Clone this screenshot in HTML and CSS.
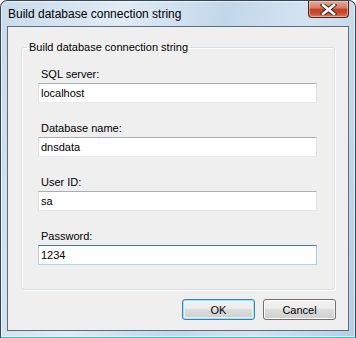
FILE: index.html
```html
<!DOCTYPE html>
<html lang="en">
<head>
    <meta charset="UTF-8">
    <meta name="viewport" content="width=device-width, initial-scale=1.0">
    <title>Build database connection string</title>
    <link rel="stylesheet" href="styles.css">
</head>
<body>
    <div class="window">
        <div class="titlebar">
            <span class="title">Build database connection string</span>
            <button class="close" title="Close">
                <svg width="17" height="11" viewBox="0 0 17 11">
                    <path d="M3 1 L14 10 M14 1 L3 10" stroke="#3a2a28" stroke-width="4.5" stroke-linecap="square"/>
                    <path d="M3 1 L14 10 M14 1 L3 10" stroke="#ffffff" stroke-width="2.5" stroke-linecap="square"/>
                </svg>
            </button>
        </div>
        <div class="client">
            <fieldset class="group">
                <legend>Build database connection string</legend>
                <div class="field">
                    <label for="server">SQL server:</label>
                    <input id="server" type="text" value="localhost">
                </div>
                <div class="field">
                    <label for="database">Database name:</label>
                    <input id="database" type="text" value="dnsdata">
                </div>
                <div class="field">
                    <label for="user">User ID:</label>
                    <input id="user" type="text" value="sa">
                </div>
                <div class="field">
                    <label for="password">Password:</label>
                    <input id="password" class="focused" type="text" value="1234">
                </div>
            </fieldset>
            <div class="actions">
                <button class="btn default">OK</button>
                <button class="btn">Cancel</button>
            </div>
        </div>
    </div>
</body>
</html>
```

FILE: styles.css
```css
body {
    margin: 0;
    font-family: "Liberation Sans", Arial, sans-serif;
    background-color: #ffffff;
}
.window {
    width: 356px;
    height: 338px;
    box-sizing: border-box;
    border: 1px solid #34475a;
    border-bottom-color: #29c4e8;
    border-radius: 7px 7px 0 0;
    background: linear-gradient(100deg, #c9dbeb 0%, #e0ebf5 30%, #c3d7ea 55%, #d4e3f1 75%, #b6cee6 100%);
    box-shadow: inset 0 0 0 1px rgba(255, 255, 255, 0.6);
    display: flex;
    flex-direction: column;
}
.titlebar {
    height: 25px;
    display: flex;
    align-items: flex-start;
    padding: 0 6px 0 7px;
}
.title {
    font-size: 12px;
    line-height: 15px;
    padding-top: 6px;
    color: #000;
}
.close {
    margin-left: auto;
    width: 41px;
    height: 17px;
    padding: 0;
    border: 1px solid #4a2620;
    border-top: none;
    border-radius: 0 0 4px 4px;
    background: linear-gradient(#e8a898 0%, #d67a62 45%, #c2422a 50%, #c84a30 75%, #e0785a 100%);
    box-shadow: inset 0 0 0 1px rgba(255, 220, 200, 0.5);
    display: flex;
    align-items: center;
    justify-content: center;
}
.client {
    flex: 1;
    margin: 0 6px 6px;
    border: 1px solid #5f6d7b;
    background-color: #efefef;
    display: flex;
    flex-direction: column;
}
.group {
    margin: 14px 13px 0;
    padding: 14px 17px 24px 16px;
    border: 1px solid #d5dfe5;
    border-radius: 3px;
    box-shadow: inset 1px 1px 0 #fff, 1px 1px 0 #fff;
    display: flex;
    flex-direction: column;
    gap: 19px;
}
.group legend {
    font-size: 11px;
    line-height: 13px;
    padding: 0 2px;
    margin-left: -11px;
    color: #000;
}
.field {
    display: flex;
    flex-direction: column;
    gap: 2px;
}
.field label {
    font-size: 11px;
    line-height: 13px;
    padding-left: 3px;
    color: #000;
}
.field input {
    height: 20px;
    box-sizing: border-box;
    margin: 0;
    padding: 0 2px;
    border: 1px solid;
    border-color: #abadb3 #e2e3ea #e3e9ef #dbdfe6;
    background: #fff;
    font-family: "Liberation Sans", Arial, sans-serif;
    font-size: 11px;
    color: #000;
    outline: none;
}
.field input.focused {
    border-color: #3d7bad #a4c9e3 #b5cfe7 #b5cfe7;
}
.actions {
    display: flex;
    justify-content: flex-end;
    gap: 8px;
    margin-top: 9px;
    padding-right: 12px;
}
.btn {
    width: 73px;
    height: 21px;
    padding: 0;
    border: 1px solid #707070;
    border-radius: 3px;
    background: linear-gradient(#f2f2f2 0%, #ebebeb 50%, #dddddd 50%, #cfcfcf 100%);
    box-shadow: inset 0 0 0 1px #fcfcfc;
    font-family: "Liberation Sans", Arial, sans-serif;
    font-size: 11px;
    color: #000;
}
.btn.default {
    border-color: #3c7fb1;
    box-shadow: inset 0 0 0 1px #9fe2fb, inset 0 0 0 2px #e2f4fc;
}
```
